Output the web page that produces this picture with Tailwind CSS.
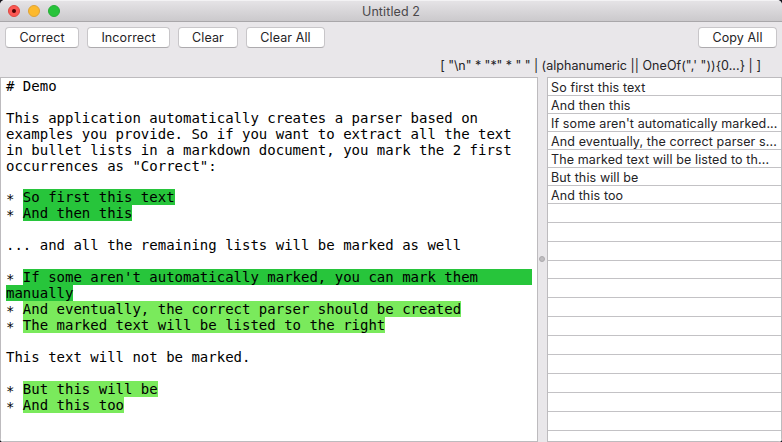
<!DOCTYPE html>
<html lang="en">
<head>
<meta charset="utf-8">
<title>Untitled 2</title>
<script src="https://cdn.jsdelivr.net/npm/@tailwindcss/browser@4"></script>
</head>
<body class="w-[782px] h-[442px] overflow-hidden bg-[#15141c] font-['Inter',sans-serif] text-[#242326]">
<div class="flex h-[442px] w-[782px] flex-col overflow-hidden rounded-t-[5px] rounded-b-[4px] bg-[#e9e7ea]">
  <header class="relative flex h-[22px] shrink-0 items-center border-t border-b border-t-[#f3f2f4] border-b-[#a9a7aa] bg-linear-to-b from-[#e5e3e6] to-[#cbc9cc] pl-2">
    <div class="flex gap-2">
      <span class="flex size-3 items-center justify-center rounded-full border border-[#dd4840] bg-[#fc5753]"><span class="size-1 rounded-full bg-[#4a0303]"></span></span>
      <span class="size-3 rounded-full border border-[#dea236] bg-[#fdb92d]"></span>
      <span class="size-3 rounded-full border border-[#27ad38] bg-[#27c33a]"></span>
    </div>
    <h1 class="absolute inset-x-0 pt-px text-center text-[12.5px] leading-5 tracking-[0.1px] text-[#4a484b]">Untitled 2</h1>
  </header>
  <div class="flex h-[34px] shrink-0 items-start px-[5px] pt-[5px] text-[12.5px] tracking-[0.1px]">
    <button class="mr-2 h-[21px] w-[74px] rounded-[4px] border border-[#c8c6c9] border-b-[#adabae] bg-white leading-[19px]">Correct</button>
    <button class="mr-2 h-[21px] w-[83px] rounded-[4px] border border-[#c8c6c9] border-b-[#adabae] bg-white leading-[19px]">Incorrect</button>
    <button class="mr-2 h-[21px] w-[60px] rounded-[4px] border border-[#c8c6c9] border-b-[#adabae] bg-white leading-[19px]">Clear</button>
    <button class="h-[21px] w-[79px] rounded-[4px] border border-[#c8c6c9] border-b-[#adabae] bg-white leading-[19px]">Clear All</button>
    <button class="ml-auto h-[21px] w-[79px] rounded-[4px] border border-[#c8c6c9] border-b-[#adabae] bg-white leading-[19px]">Copy All</button>
  </div>
  <div class="flex h-[21px] shrink-0 justify-end pr-[21px] text-[12.5px] leading-[19px] whitespace-pre"><span class="tracking-[-0.05px]">[ "\n" * "*" * " " | </span><span class="tracking-[0.05px]">(alphanumeric || OneOf(",' ")){0...} | ]</span></div>
  <main class="flex h-[365px]">
    <section class="w-[538px] border border-[#bdbbbe] bg-white pl-[5px] font-['DejaVu_Sans_Mono',monospace] text-[14px] leading-4 text-black *:whitespace-pre">
      <div class="h-4"># Demo</div>
      <div class="h-4"></div>
      <div class="h-4">This application automatically creates a parser based on</div>
      <div class="h-4">examples you provide. So if you want to extract all the text</div>
      <div class="h-4">in bullet lists in a markdown document, you mark the 2 first</div>
      <div class="h-4">occurrences as "Correct":</div>
      <div class="h-[15px]"></div>
      <div class="flex h-4"><span class="translate-y-[2px]">* </span><span class="bg-[#27c53b]">So first this text</span></div>
      <div class="flex h-4"><span class="translate-y-[2px]">* </span><span class="bg-[#27c53b]">And then this</span></div>
      <div class="h-4"></div>
      <div class="h-4">... and all the remaining lists will be marked as well</div>
      <div class="h-4"></div>
      <div class="flex h-4"><span class="translate-y-[2px]">* </span><span class="mr-[5px] flex-1 bg-[#27c53b]">If some aren't automatically marked, you can mark them</span></div>
      <div class="flex h-4"><span class="bg-[#27c53b]">manually</span></div>
      <div class="flex h-4"><span class="translate-y-[2px]">* </span><span class="bg-[#7aea5c]">And eventually, the correct parser should be created</span></div>
      <div class="flex h-4"><span class="translate-y-[2px]">* </span><span class="bg-[#7aea5c]">The marked text will be listed to the right</span></div>
      <div class="h-4"></div>
      <div class="h-4">This text will not be marked.</div>
      <div class="h-4"></div>
      <div class="flex h-4"><span class="translate-y-[2px]">* </span><span class="bg-[#7aea5c]">But this will be</span></div>
      <div class="flex h-4"><span class="translate-y-[2px]">* </span><span class="bg-[#7aea5c]">And this too</span></div>
    </section>
    <div class="flex w-[9px] items-center pb-[2px] pl-px"><span class="size-[6px] rounded-full border border-[#acaaad] bg-[#bfbdc0]"></span></div>
    <section class="w-[235px] overflow-hidden border border-[#bdbbbe] bg-white text-[12.5px] leading-[19px] tracking-[0.12px] whitespace-nowrap *:border-b *:border-[#c3c2c5] *:pl-[3px]">
      <div class="h-[18px]">So first this text</div>
      <div class="h-[18px]">And then this</div>
      <div class="h-[18px]">If some aren't automatically marked...</div>
      <div class="h-[18px]">And eventually, the correct parser s...</div>
      <div class="h-[18px]">The marked text will be listed to th...</div>
      <div class="h-[18px]">But this will be</div>
      <div class="h-[18px]">And this too</div>
      <div class="h-[19px]"></div><div class="h-[19px]"></div><div class="h-[19px]"></div>
      <div class="h-[18px]"></div><div class="h-[19px]"></div><div class="h-[19px]"></div>
      <div class="h-[19px]"></div><div class="h-[19px]"></div><div class="h-[19px]"></div>
      <div class="h-[19px]"></div><div class="h-[19px]"></div><div class="h-[19px]"></div>
    </section>
  </main>
</div>
</body>
</html>
